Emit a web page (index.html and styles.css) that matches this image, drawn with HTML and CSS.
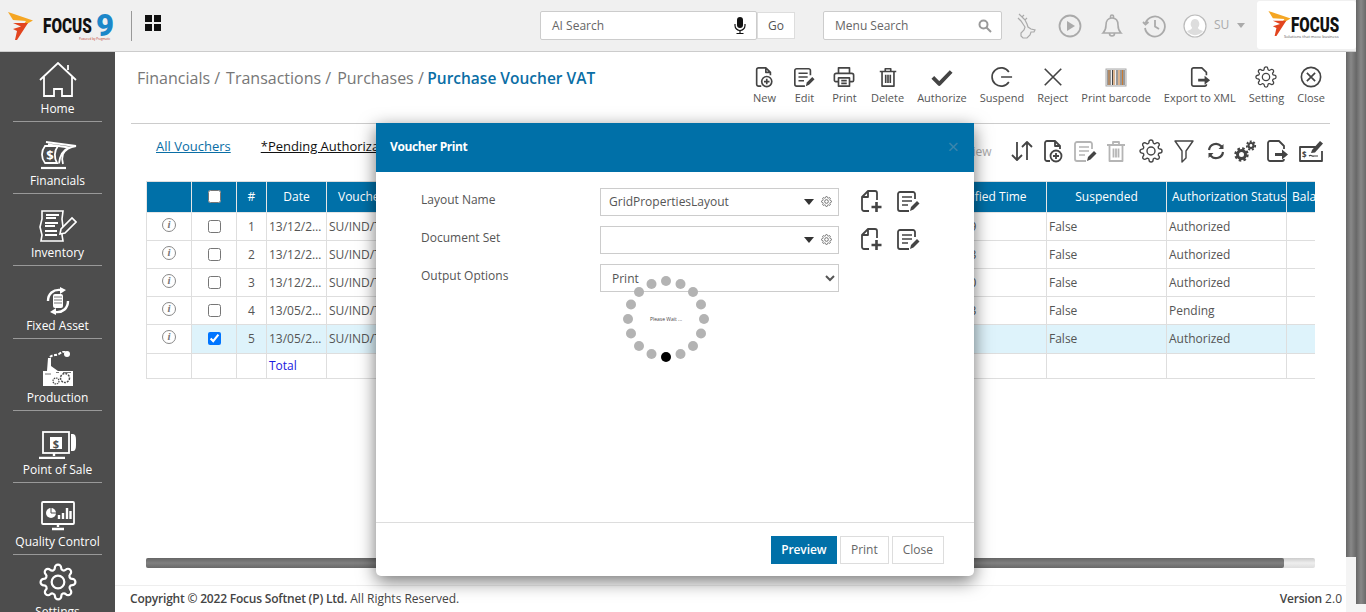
FILE: index.html
```html
<!DOCTYPE html>
<html lang="en">
<head>
    <meta charset="UTF-8">
    <title>Purchase Voucher VAT</title>
    <link rel="stylesheet" href="styles.css">
</head>
<body>
    <!-- shared icons -->
    <svg class="defs" width="0" height="0">
        <symbol id="gear" viewBox="0 0 24 24">
            <circle cx="12" cy="12" r="4"/>
            <path d="M19.4 15a1.65 1.65 0 0 0 .33 1.82l.06.06a2 2 0 0 1 0 2.83 2 2 0 0 1-2.83 0l-.06-.06a1.65 1.65 0 0 0-1.82-.33 1.65 1.65 0 0 0-1 1.51V21a2 2 0 0 1-2 2 2 2 0 0 1-2-2v-.09A1.65 1.65 0 0 0 9 19.4a1.65 1.65 0 0 0-1.82.33l-.06.06a2 2 0 0 1-2.83 0 2 2 0 0 1 0-2.83l.06-.06a1.65 1.65 0 0 0 .33-1.82 1.65 1.65 0 0 0-1.51-1H3a2 2 0 0 1-2-2 2 2 0 0 1 2-2h.09A1.65 1.65 0 0 0 4.6 9a1.65 1.65 0 0 0-.33-1.82l-.06-.06a2 2 0 0 1 0-2.83 2 2 0 0 1 2.83 0l.06.06a1.65 1.65 0 0 0 1.82.33H9a1.65 1.65 0 0 0 1-1.51V3a2 2 0 0 1 2-2 2 2 0 0 1 2 2v.09a1.65 1.65 0 0 0 1 1.51 1.65 1.65 0 0 0 1.82-.33l.06-.06a2 2 0 0 1 2.83 0 2 2 0 0 1 0 2.83l-.06.06a1.65 1.65 0 0 0-.33 1.82V9a1.65 1.65 0 0 0 1.51 1H21a2 2 0 0 1 2 2 2 2 0 0 1-2 2h-.09a1.65 1.65 0 0 0-1.51 1z"/>
        </symbol>
        <symbol id="doc-new" viewBox="0 0 24 24">
            <path d="M9 22H6a2 2 0 0 1-2-2V4a2 2 0 0 1 2-2h8l5 5v3M14 2v5h5"/>
            <circle cx="15" cy="17" r="5.5"/>
            <path d="M15 14v6M12 17h6"/>
        </symbol>
        <symbol id="doc-edit" viewBox="0 0 24 24">
            <path d="M19 10V5a2 2 0 0 0-2-2H4a2 2 0 0 0-2 2v15a2 2 0 0 0 2 2h9"/>
            <path d="M6 8h10M6 12h10M6 16h6" stroke-width="1.6"/>
            <path class="solid" d="M14 22l1-4 6-6 2.500 2.500-6 6z"/>
        </symbol>
        <symbol id="trash" viewBox="0 0 24 24">
            <path d="M3 6h18M9 6V3h6v3M5.500 6v16h13V6"/>
            <path d="M9.500 9.500v9M12 9.500v9M14.500 9.500v9"/>
        </symbol>
        <symbol id="export" viewBox="0 0 24 24">
            <path d="M19 20a2 2 0 0 1-2 2H5a2 2 0 0 1-2-2V4a2 2 0 0 1 2-2h9l5 5v3"/>
            <path class="solid" d="M10 14h7v-3.500l6 5-6 5V17h-7z"/>
        </symbol>
        <symbol id="doc-add" viewBox="0 0 24 24">
            <path d="M10 22H5a2 2 0 0 1-2-2V8l6-6h7a2 2 0 0 1 2 2v7M9 2v6H3"/>
            <path d="M17.500 13v10M12.500 18h10" stroke-width="2.600"/>
        </symbol>
        <symbol id="flag" viewBox="0 0 26 28">
            <path fill="#f5a623" d="M0 0l25 8.500-11 6 4-5.500-13-1z"/>
            <path fill="#e2451f" d="M5 11h15L9 28H7l2-9-4-2 8-2.500z"/>
        </symbol>
    </svg>

    <div class="page">
        <div class="app">
            <header class="topbar">
                <div class="brand">
                    <svg class="brand-mark"><use href="#flag"/></svg>
                    <span class="brand-name">FOCUS</span>
                    <span class="brand-nine">9</span>
                    <span class="brand-tag">Powered by Pragmatic</span>
                </div>
                <div class="brand-sep"></div>
                <div class="apps-grid"><i></i><i></i><i></i><i></i></div>

                <div class="search ai-search">
                    <span>AI Search</span>
                    <svg width="12" height="18" viewBox="0 0 12 18">
                        <rect x="3" y="0" width="6" height="11" rx="3" fill="#111"/>
                        <path d="M1 7v1.500a5 5 0 0 0 10 0V7M6 13.500V16M2.500 16.500h7" fill="none" stroke="#111" stroke-width="1.200"/>
                    </svg>
                </div>
                <button class="go-btn">Go</button>
                <div class="search menu-search">
                    <span>Menu Search</span>
                    <svg width="14" height="14" viewBox="0 0 14 14" fill="none" stroke="#999" stroke-width="2">
                        <circle cx="5.500" cy="5.500" r="4"/>
                        <path d="M8.500 8.500l4.500 4.500"/>
                    </svg>
                </div>

                <div class="top-icons">
                    <svg class="deer" width="20" height="26" viewBox="0 0 20 26" fill="none" stroke="#aaa" stroke-width="1.200">
                        <path d="M2 1l3 3 2-2M5 4l3 3 2-2M8 7l2 4 1 3 3 2 4 1-1 2-3 0-1 3-3 3-4 0-2-2 0-3 3-3 1-3-2-3-2-3-3-3"/>
                    </svg>
                    <svg class="play" width="24" height="24" viewBox="0 0 24 24" fill="none" stroke="#aaa" stroke-width="1.800">
                        <circle cx="12" cy="12" r="10.500"/>
                        <path d="M9 7l8 5-8 5z" fill="#aaa" stroke="none"/>
                    </svg>
                    <svg class="bell" width="22" height="24" viewBox="0 0 22 24" fill="none" stroke="#aaa" stroke-width="1.600">
                        <path d="M2 19c2-2 3-4 3-8 0-4 2-7 6-7s6 3 6 7c0 4 1 6 3 8zM9.500 4V2.500a1.500 1.500 0 0 1 3 0V4M8.500 19.500a2.500 2.500 0 0 0 5 0"/>
                    </svg>
                    <svg class="history" width="24" height="24" viewBox="0 0 24 24" fill="none" stroke="#aaa" stroke-width="1.800">
                        <path d="M3.500 9a10 10 0 1 1-.5 5M1 8l2.500 2.500L6.500 8M13 6v6.500l4 2.500"/>
                    </svg>
                    <svg class="avatar" width="24" height="24" viewBox="0 0 24 24">
                        <circle cx="12" cy="12" r="11" fill="#fff" stroke="#bbb" stroke-width="1.200"/>
                        <path d="M12 5a4.500 5 0 0 1 3 8.500c0 1.500 1 2 5 3.500a9.800 9.800 0 0 1-16 0c4-1.500 5-2 5-3.500A4.500 5 0 0 1 12 5z" fill="#ddd"/>
                    </svg>
                    <span class="user">SU</span>
                    <span class="user-caret"></span>
                </div>

                <div class="logo-box">
                    <svg class="brand-mark small"><use href="#flag"/></svg>
                    <span class="logo-name">FOCUS</span>
                    <span class="logo-tag">Solutions that move business</span>
                </div>
            </header>

            <div class="body">
                <nav class="sidebar">
                    <a class="nav-item">
                        <svg width="38" height="36" viewBox="0 0 38 36" fill="none" stroke="#fff" stroke-width="1.800">
                            <path d="M1 18L19 1l18 17M5 15v19h10v-7h8v7h10V15M29 8V3"/>
                        </svg>
                        <span>Home</span>
                    </a>
                    <a class="nav-item">
                        <svg width="38" height="29" viewBox="0 0 38 29" fill="none" stroke="#fff" stroke-width="1.800">
                            <path d="M6 5C2 10 2 17 6 22h12c-3-5-3-12 1-17z"/>
                            <path d="M7 1l30 4c-7 1-11 4-13 8-1 3-1 7 0 10M9 3.500L30 6.500c-5 2-9 6-10 16"/>
                            <path d="M2 27h25" stroke-width="2.200"/>
                            <text class="bill" x="11" y="18.500">$</text>
                        </svg>
                        <span>Financials</span>
                    </a>
                    <a class="nav-item">
                        <svg width="38" height="32" viewBox="0 0 38 32" fill="none" stroke="#fff" stroke-width="1.600">
                            <path d="M3 1h21l-1 8 1 8-1 8 1 6H2l1-6-2-8 2-8z"/>
                            <path d="M7 5h13M7 8h10M6 13h13M6 16h10M6 21h12M6 25h12" stroke-width="2"/>
                            <path d="M21 24l1-5L33 8l4 4-11 11z" fill="#4d4d4d"/>
                        </svg>
                        <span>Inventory</span>
                    </a>
                    <a class="nav-item">
                        <svg width="24" height="28" viewBox="0 0 24 28" fill="none" stroke="#fff" stroke-width="2.400">
                            <path d="M2 14C2 7 7 2 15 3M22 14c0 7-5 12-13 11"/>
                            <path d="M14 0l6 3-6 4zM10 21l-6 4 6 3z" fill="#fff" stroke="none"/>
                            <rect x="7" y="7" width="10" height="14" rx="2" fill="#fff" stroke="none"/>
                            <path d="M8 10h8M8 13h8M8 16h8" stroke="#777" stroke-width="1"/>
                        </svg>
                        <span>Fixed Asset</span>
                    </a>
                    <a class="nav-item">
                        <svg width="32" height="36" viewBox="0 0 32 36">
                            <path d="M1 35V20h4L6 7h3v8l7 5h15v15z" fill="#fff"/>
                            <path d="M8 6c3-3 6-1 9-3 3-2 5-3 7-2" fill="none" stroke="#fff" stroke-width="2" stroke-dasharray="3 1.500"/>
                            <circle cx="25" cy="3" r="3" fill="#fff"/>
                            <circle cx="23" cy="27" r="4.500" fill="#fff" stroke="#4d4d4d" stroke-width="1.500" stroke-dasharray="2 1"/>
                            <circle cx="14" cy="30" r="3" fill="#fff" stroke="#4d4d4d" stroke-width="1.200" stroke-dasharray="1.500 .8"/>
                            <path d="M3 23h6M14 21.500h3M21 21.500h8" stroke="#777" stroke-width="1"/>
                        </svg>
                        <span>Production</span>
                    </a>
                    <a class="nav-item">
                        <svg width="38" height="28" viewBox="0 0 38 28" fill="none" stroke="#fff" stroke-width="1.800">
                            <rect x="4" y="1" width="26" height="21"/>
                            <path d="M32 3h2c2 0 3 2 3 6v5c0 4-1 6-3 6h-2z" fill="#fff" stroke="none"/>
                            <path d="M15 22v3M0 27h26" stroke-width="2.400"/>
                            <rect x="11" y="6" width="12" height="12" fill="#fff" stroke="none"/>
                            <text class="pos" x="17" y="16.500">$</text>
                        </svg>
                        <span>Point of Sale</span>
                    </a>
                    <a class="nav-item">
                        <svg width="34" height="30" viewBox="0 0 34 30" fill="none" stroke="#fff" stroke-width="1.800">
                            <rect x="1" y="1" width="32" height="22" rx="1"/>
                            <circle cx="10" cy="12" r="5" fill="#fff" stroke="none"/>
                            <path d="M10 12V7M10 12l5 0" stroke="#4d4d4d" stroke-width="1"/>
                            <path d="M18 18v-4M22 18v-6M26 18V7M29.500 18V10" stroke-width="2.400"/>
                            <path d="M17 23v3M11 28h12" stroke-width="2.400"/>
                        </svg>
                        <span>Quality Control</span>
                    </a>
                    <a class="nav-item">
                        <svg class="ico side-gear" width="38" height="38"><use href="#gear"/></svg>
                        <span>Settings</span>
                    </a>
                </nav>

                <main class="content">
                    <div class="title-row">
                        <div class="crumbs">
                            <span>Financials /</span>
                            <span>Transactions /</span>
                            <span>Purchases /</span>
                            <b>Purchase Voucher VAT</b>
                        </div>
                        <div class="actions">
                            <a class="action"><svg class="ico" width="22" height="22"><use href="#doc-new"/></svg><span>New</span></a>
                            <a class="action"><svg class="ico" width="22" height="22"><use href="#doc-edit"/></svg><span>Edit</span></a>
                            <a class="action">
                                <svg class="ico" width="22" height="22" viewBox="0 0 24 24">
                                    <path d="M6 8V2h12v6M6 17H3a1.500 1.500 0 0 1-1.500-1.500V10A2 2 0 0 1 3.500 8h17a2 2 0 0 1 2 2v5.500A1.500 1.500 0 0 1 21 17h-3M6 13h12v9H6zM9 16h6M9 19h6"/>
                                </svg>
                                <span>Print</span>
                            </a>
                            <a class="action"><svg class="ico" width="22" height="22"><use href="#trash"/></svg><span>Delete</span></a>
                            <a class="action">
                                <svg class="ico" width="22" height="22" viewBox="0 0 24 24" style="stroke-width:4.200">
                                    <path d="M2 12.500l7 7L22 6"/>
                                </svg>
                                <span>Authorize</span>
                            </a>
                            <a class="action">
                                <svg class="ico" width="22" height="22" viewBox="0 0 24 24">
                                    <path d="M19.500 6.500a10 10 0 1 0 0 11M11 12h12"/>
                                </svg>
                                <span>Suspend</span>
                            </a>
                            <a class="action">
                                <svg class="ico" width="22" height="22" viewBox="0 0 24 24">
                                    <path d="M3 3l18 18M21 3L3 21"/>
                                </svg>
                                <span>Reject</span>
                            </a>
                            <a class="action">
                                <svg width="22" height="22" viewBox="0 0 22 22">
                                    <rect x="1" y="3" width="20" height="17" fill="#eee" stroke="#aaa"/>
                                    <path d="M3 4v15M5 4v15M7.500 4v15M12 4v15M16 4v15M19 4v15" stroke="#444" stroke-width="1"/>
                                    <path d="M4 4v15M9 4v15M14 4v15M17.500 4v15" stroke="#c87a32" stroke-width="1"/>
                                </svg>
                                <span>Print barcode</span>
                            </a>
                            <a class="action"><svg class="ico" width="22" height="22"><use href="#export"/></svg><span>Export to XML</span></a>
                            <a class="action"><svg class="ico thin" width="22" height="22"><use href="#gear"/></svg><span>Setting</span></a>
                            <a class="action">
                                <svg class="ico" width="22" height="22" viewBox="0 0 24 24">
                                    <circle cx="12" cy="12" r="10.500"/>
                                    <path d="M7.500 7.500l9 9M16.500 7.500l-9 9"/>
                                </svg>
                                <span>Close</span>
                            </a>
                        </div>
                    </div>

                    <div class="tab-row">
                        <a class="view-link">All Vouchers</a>
                        <a class="view-link pending">*Pending Authorization</a>
                        <span class="view-text">View</span>
                        <div class="tools">
                            <svg class="ico" width="24" height="24" viewBox="0 0 24 24">
                                <path d="M7 3v18M2 16l5 5 5-5M17 21V3M12 8l5-5 5 5"/>
                            </svg>
                            <svg class="ico" width="24" height="24"><use href="#doc-new"/></svg>
                            <svg class="ico off" width="24" height="24"><use href="#doc-edit"/></svg>
                            <svg class="ico off" width="24" height="24"><use href="#trash"/></svg>
                            <svg class="ico thin t-gear" width="24" height="24"><use href="#gear"/></svg>
                            <svg class="ico thin t-filter" width="24" height="24" viewBox="0 0 24 24">
                                <path d="M3 2h18l-7 10v7l-4 4V12z"/>
                            </svg>
                            <svg class="ico" width="24" height="24" viewBox="0 0 24 24">
                                <path d="M5 11a7 7 0 0 1 12-4l1 1M19 13a7 7 0 0 1-12 4l-1-1" stroke-width="2.200"/>
                                <path class="solid" d="M19.500 5v5h-5zM4.500 19v-5h5z"/>
                            </svg>
                            <svg class="ico t-gears" width="24" height="24" viewBox="0 0 24 24">
                                <circle cx="8.500" cy="15.500" r="4" stroke-width="3"/>
                                <circle cx="8.500" cy="15.500" r="6" stroke-width="2.400" stroke-dasharray="2.500 2.200"/>
                                <circle cx="18" cy="6.500" r="2.500" stroke-width="2.200"/>
                                <circle cx="18" cy="6.500" r="4.200" stroke-width="1.800" stroke-dasharray="2 1.600"/>
                            </svg>
                            <svg class="ico" width="24" height="24"><use href="#export"/></svg>
                            <svg class="ico narrow" width="26" height="24" viewBox="0 0 26 24">
                                <path d="M20 8H1v14h22V12"/>
                                <path d="M4 18h0M10 17c2-2 3 1 5 0h4" stroke-width="1.200"/>
                                <text class="cheque" x="3" y="19">$</text>
                                <path class="solid" d="M12 14l1-3 8-9 3 2.500-8 9z"/>
                            </svg>
                        </div>
                    </div>

                    <div class="table-wrap">
                        <table class="grid">
                            <colgroup>
                                <col class="c-info"><col class="c-check"><col class="c-num"><col class="c-date">
                                <col class="c-wide"><col class="c-wide"><col class="c-wide"><col class="c-wide"><col class="c-wide">
                                <col class="c-wide"><col class="c-wide"><col class="c-wide"><col class="c-wide">
                            </colgroup>
                            <thead>
                                <tr>
                                    <th></th>
                                    <th><input type="checkbox"></th>
                                    <th>#</th>
                                    <th>Date</th>
                                    <th class="left voucher">Voucher No</th>
                                    <th></th><th></th><th></th><th></th>
                                    <th>Modified Time</th>
                                    <th>Suspended</th>
                                    <th class="left">Authorization Status</th>
                                    <th class="left">Balance</th>
                                </tr>
                            </thead>
                            <tbody>
                                <tr>
                                    <td class="mid"><span class="info">i</span></td>
                                    <td class="mid"><input type="checkbox"></td>
                                    <td class="mid">1</td>
                                    <td>13/12/2022</td><td>SU/IND/TAX/1</td>
                                    <td></td><td></td><td></td><td></td>
                                    <td>10:51:09</td><td>False</td><td>Authorized</td><td></td>
                                </tr>
                                <tr>
                                    <td class="mid"><span class="info">i</span></td>
                                    <td class="mid"><input type="checkbox"></td>
                                    <td class="mid">2</td>
                                    <td>13/12/2022</td><td>SU/IND/TAX/2</td>
                                    <td></td><td></td><td></td><td></td>
                                    <td>10:52:13</td><td>False</td><td>Authorized</td><td></td>
                                </tr>
                                <tr>
                                    <td class="mid"><span class="info">i</span></td>
                                    <td class="mid"><input type="checkbox"></td>
                                    <td class="mid">3</td>
                                    <td>13/12/2022</td><td>SU/IND/TAX/3</td>
                                    <td></td><td></td><td></td><td></td>
                                    <td>10:53:10</td><td>False</td><td>Authorized</td><td></td>
                                </tr>
                                <tr>
                                    <td class="mid"><span class="info">i</span></td>
                                    <td class="mid"><input type="checkbox"></td>
                                    <td class="mid">4</td>
                                    <td>13/05/2023</td><td>SU/IND/TAX/4</td>
                                    <td></td><td></td><td></td><td></td>
                                    <td>11:20:13</td><td>False</td><td>Pending</td><td></td>
                                </tr>
                                <tr class="picked">
                                    <td class="mid first"><span class="info">i</span></td>
                                    <td class="mid"><input type="checkbox" checked></td>
                                    <td class="mid">5</td>
                                    <td>13/05/2023</td><td>SU/IND/TAX/5</td>
                                    <td></td><td></td><td></td><td></td>
                                    <td></td><td>False</td><td>Authorized</td><td></td>
                                </tr>
                                <tr class="total">
                                    <td></td><td></td><td></td>
                                    <td class="total-label">Total</td>
                                    <td></td><td></td><td></td><td></td><td></td><td></td><td></td><td></td><td></td>
                                </tr>
                            </tbody>
                        </table>
                    </div>

                    <div class="hscroll"><div class="hscroll-thumb"></div></div>

                    <footer class="footer">
                        <div><b>Copyright © 2022 Focus Softnet (P) Ltd.</b> All Rights Reserved.</div>
                        <div><b>Version</b> 2.0</div>
                    </footer>
                </main>
                <div class="vscroll inner"><div class="vscroll-thumb"></div></div>
            </div>
        </div>
        <div class="vscroll outer"><div class="vscroll-thumb"></div></div>
    </div>

    <!-- print dialog -->
    <div class="modal">
        <div class="modal-head">
            <h4>Voucher Print</h4>
            <span class="modal-x">×</span>
        </div>
        <div class="modal-body">
            <div class="form-row">
                <label>Layout Name</label>
                <div class="combo">
                    <span>GridPropertiesLayout</span>
                    <i class="combo-caret"></i>
                    <svg class="ico tiny" width="11" height="11"><use href="#gear"/></svg>
                </div>
                <svg class="ico side" width="24" height="24"><use href="#doc-add"/></svg>
                <svg class="ico side" width="24" height="24"><use href="#doc-edit"/></svg>
            </div>
            <div class="form-row">
                <label>Document Set</label>
                <div class="combo">
                    <span></span>
                    <i class="combo-caret"></i>
                    <svg class="ico tiny" width="11" height="11"><use href="#gear"/></svg>
                </div>
                <svg class="ico side" width="24" height="24"><use href="#doc-add"/></svg>
                <svg class="ico side" width="24" height="24"><use href="#doc-edit"/></svg>
            </div>
            <div class="form-row">
                <label>Output Options</label>
                <select class="output">
                    <option>Print</option>
                </select>
            </div>

            <svg class="spinner" width="100" height="100" viewBox="-50 -50 100 100">
                <g fill="#b3b3b3">
                    <circle cx="0" cy="-38" r="5"/><circle cx="14.500" cy="-35" r="5"/>
                    <circle cx="27" cy="-27" r="5"/><circle cx="35" cy="-14.500" r="5"/>
                    <circle cx="38" cy="0" r="5"/><circle cx="35" cy="14.500" r="5"/>
                    <circle cx="27" cy="27" r="5"/><circle cx="14.500" cy="35" r="5"/>
                    <circle cx="-14.500" cy="35" r="5"/><circle cx="-27" cy="27" r="5"/>
                    <circle cx="-35" cy="14.500" r="5"/><circle cx="-38" cy="0" r="5"/>
                    <circle cx="-35" cy="-14.500" r="5"/><circle cx="-27" cy="-27" r="5"/>
                    <circle cx="-14.500" cy="-35" r="5"/>
                </g>
                <circle cx="0" cy="38" r="5" fill="#000"/>
                <text x="0" y="2" text-anchor="middle">Please Wait ...</text>
            </svg>
        </div>
        <div class="modal-foot">
            <button class="mbtn primary">Preview</button>
            <button class="mbtn">Print</button>
            <button class="mbtn">Close</button>
        </div>
    </div>
</body>
</html>
```

FILE: styles.css
```css
/* colors */
:root {
    --blue: #0070a8;
    --line: #dedede;
    --side: #4d4d4d;
    --ink: #444;
}

* {
    box-sizing: border-box;
}

html, body {
    margin: 0;
    height: 612px;
    overflow: hidden;
}

body {
    font-family: "Open Sans", "Liberation Sans", sans-serif;
    font-size: 12px;
    color: #555;
    background: #fff;
    position: relative;
}

.defs {
    position: absolute;
}

.page {
    display: flex;
    height: 612px;
}

.app {
    width: 1356px;
    display: flex;
    flex-direction: column;
}

/* icon defaults */
.ico {
    fill: none;
    stroke: var(--ink);
    stroke-width: 1.8;
    stroke-linejoin: round;
    flex: none;
}

.ico .solid, .solid {
    fill: var(--ink);
    stroke: none;
}

.ico.thin {
    stroke-width: 1.4;
}

.ico.off {
    stroke: #b5b5b5;
}

.ico.off .solid {
    fill: #b5b5b5;
}

/* top bar */
.topbar {
    height: 52px;
    flex: none;
    display: flex;
    align-items: center;
    background: #f0f0f0;
    border-bottom: 1px solid #ccc;
}

.brand {
    position: relative;
    width: 131px;
    height: 51px;
    display: flex;
    align-items: center;
    padding-left: 8px;
    flex: none;
}

.brand-mark {
    width: 26px;
    height: 28px;
    flex: none;
}

.brand-name {
    font-family: Roboto, sans-serif;
    font-weight: 900;
    font-size: 21px;
    color: #111;
    margin-left: 9px;
    display: inline-block;
    width: 50px;
    transform: scaleX(.73);
    transform-origin: left center;
}

.brand-nine {
    font-family: Roboto, sans-serif;
    font-weight: 900;
    font-size: 31px;
    color: #1c87c9;
    line-height: 30px;
    margin-left: 3px;
}

.brand-tag {
    position: absolute;
    left: 79px;
    top: 38px;
    font-size: 3px;
    line-height: 3px;
    color: #c0392b;
}

.brand-sep {
    width: 1px;
    height: 30px;
    background: #999;
    flex: none;
}

.apps-grid {
    display: grid;
    grid-template-columns: 7px 7px;
    gap: 2px;
    margin-left: 13px;
    margin-top: -5px;
    flex: none;
}

.apps-grid i {
    height: 7px;
    background: #111;
}

.search {
    height: 29px;
    display: flex;
    align-items: center;
    justify-content: space-between;
    background: #fff;
    border: 1px solid #ccc;
    border-radius: 2px;
    padding: 0 11px;
    color: #666;
    font-size: 12px;
    flex: none;
}

.ai-search {
    width: 217px;
    margin-left: 379px;
    padding-right: 10px;
}

.go-btn {
    width: 38px;
    height: 27px;
    border: 1px solid #ddd;
    background: #fff;
    color: #555;
    font: 12px "Open Sans", sans-serif;
    padding: 0;
    flex: none;
}

.menu-search {
    width: 179px;
    margin-left: 28px;
    padding-right: 9px;
}

.top-icons {
    display: flex;
    align-items: center;
    width: 256px;
    flex: none;
    position: relative;
    height: 30px;
    color: #aaa;
}

.top-icons svg, .user, .user-caret {
    position: absolute;
}

/* these sit on their own little strip so offsets are simplest */
.deer { left: 15px; top: 2px; }
.play { left: 56px; top: 3px; }
.bell { left: 99px; top: 3px; }
.history { left: 140px; top: 3px; }
.avatar { left: 181px; top: 3px; }
.user { left: 212px; top: 5px; font-size: 12px; }
.user-caret {
    left: 235px;
    top: 12px;
    border: 4px solid transparent;
    border-top: 5px solid #aaa;
    border-bottom: 0;
}

.logo-box {
    position: relative;
    width: 99px;
    height: 48px;
    margin-left: -1px;
    margin-top: -2px;
    background: #fff;
    border-radius: 3px;
    display: flex;
    align-items: center;
    padding: 0 0 3px 11px;
    flex: none;
}

.brand-mark.small {
    width: 24px;
    height: 25px;
}

.logo-name {
    font-family: Roboto, sans-serif;
    font-weight: 900;
    font-size: 21px;
    line-height: 24px;
    color: #111;
    margin: 4px 0 0 -1px;
    display: inline-block;
    transform: scaleX(.72);
    transform-origin: left center;
}

.logo-tag {
    position: absolute;
    left: 27px;
    top: 34px;
    font-size: 4px;
    line-height: 4px;
    color: #555;
    white-space: nowrap;
}

.body {
    flex: 1;
    display: flex;
    min-height: 0;
}

/* left menu */
.sidebar {
    width: 115px;
    flex: none;
    background: var(--side);
    overflow: hidden;
    height: 560px;
}

.nav-item {
    height: 72.2px;
    margin: 0 13px;
    display: flex;
    flex-direction: column;
    align-items: center;
    justify-content: flex-end;
    border-bottom: 1px solid #999;
    color: #fff;
    padding-bottom: 4px;
}

.nav-item:first-child {
    height: 70px;
}

.nav-item span {
    line-height: 16px;
    white-space: nowrap;
}

.nav-item svg {
    margin-bottom: 3px;
    flex: none;
}

.nav-item:last-child {
    border: none;
    height: 80px;
    justify-content: flex-start;
    padding-top: 8px;
}

.ico.side-gear {
    stroke: #fff;
    stroke-width: 1.4;
}

.nav-item text {
    stroke: none;
    font-weight: 700;
    font-family: "Open Sans", sans-serif;
}

.bill {
    fill: #fff;
    font-size: 13px;
    text-anchor: middle;
}

.pos {
    fill: #4d4d4d;
    font-size: 11px;
    text-anchor: middle;
}

/* main part */
.content {
    flex: 1;
    min-width: 0;
    display: flex;
    flex-direction: column;
}

.title-row {
    height: 72px;
    margin: 0 16px;
    display: flex;
    justify-content: space-between;
    border-bottom: 1px solid #ccc;
    flex: none;
}

.crumbs {
    padding: 14px 0 0 6px;
    font-size: 16px;
    line-height: 24px;
    color: #777;
    display: flex;
    gap: 6px;
    white-space: nowrap;
}

.crumbs b {
    color: #0a6ea5;
    font-weight: 600;
    font-size: 15.5px;
    margin-left: -2.5px;
}

.actions {
    display: flex;
    padding-top: 14px;
    margin-right: -1.5px;
}

.action {
    min-width: 40px;
    padding: 0 6.5px;
    display: flex;
    flex-direction: column;
    align-items: center;
    font-size: 11px;
    color: #555;
    white-space: nowrap;
}

.action span {
    line-height: 14px;
    margin-top: 3px;
}

.tab-row {
    height: 57px;
    flex: none;
    display: flex;
    align-items: center;
    padding: 0 22px 14px 41px;
    position: relative;
}

.view-link {
    color: #0a6ea5;
    text-decoration: underline;
    font-size: 13px;
    margin-right: 30px;
    white-space: nowrap;
}

.view-link.pending {
    color: #111;
}

.view-text {
    margin: 11px 18px 0 auto;
    color: #aaa;
    font-size: 12px;
}

.tools {
    display: flex;
    gap: 7.5px;
    align-items: center;
    margin-top: 11px;
}

/* the toolbar spacing is not even in the app */
.tools .t-gear { margin-left: 3px; }
.tools .t-filter { margin-left: 2px; }
.tools .t-gears { margin-left: -2px; }
.tools .narrow { margin: 0 -1px 0 3px; }

.cheque {
    font-size: 8px;
    stroke: none;
    fill: var(--ink);
    font-weight: 700;
}

/* data grid */
.table-wrap {
    margin-left: 31px;
    width: 1169px;
    height: 377px;
    overflow: hidden;
    flex: none;
}

.grid {
    border-collapse: collapse;
    table-layout: fixed;
    width: 1260px;
    color: #555;
    border: 1px solid var(--line);
}

.c-info, .c-check { width: 45px; }
.c-num { width: 30px; }
.c-date { width: 60px; }
.c-wide { width: 120px; }

.grid th {
    height: 31px;
    background: var(--blue);
    color: #fff;
    font-weight: 400;
    border: 1px solid #e6e6e6;
    border-top-color: var(--line);
    padding: 0 2px 2px;
    white-space: nowrap;
    overflow: hidden;
}

.grid th.left {
    text-align: left;
    padding-left: 5px;
}

.grid th.voucher {
    padding-left: 11px;
}

.grid td {
    height: 28px;
    border: 1px solid var(--line);
    padding: 0 2px;
    white-space: nowrap;
    overflow: hidden;
    text-overflow: ellipsis;
}

.grid td.mid {
    text-align: center;
}

.grid input {
    margin: -2px 0 0;
    vertical-align: middle;
}

.picked td {
    background: #def3fb;
    height: 29px;
    padding-bottom: 2px;
}

.picked td.first {
    background: #fff;
}

.total td {
    height: 25px;
    padding-bottom: 2px;
}

.total-label {
    color: #1a1ae0;
}

.info {
    display: inline-block;
    width: 14px;
    height: 14px;
    border: 1.5px solid #888;
    border-radius: 50%;
    font: italic 700 11px/11px "Liberation Serif", serif;
    color: #777;
    text-align: center;
    vertical-align: 3px;
}

/* scroll bars */
.hscroll {
    margin-left: 31px;
    width: 1169px;
    height: 10px;
    background: linear-gradient(#ccc, #eee 50%, #ddd);
    border-radius: 2px;
    flex: none;
}

.hscroll-thumb {
    width: 1138px;
    height: 10px;
    border-radius: 2px;
    background: linear-gradient(#666, #808080 50%, #6a6a6a);
}

.vscroll {
    width: 10px;
    flex: none;
    background: #f4f4f4;
}

.vscroll-thumb {
    background: linear-gradient(90deg, #666, #888 50%, #6a6a6a);
}

.vscroll.inner .vscroll-thumb {
    height: 505px;
}

.vscroll.outer {
    height: 612px;
}

.vscroll.outer .vscroll-thumb {
    height: 604px;
}

.footer {
    margin-top: 17px;
    flex: 1;
    display: flex;
    justify-content: space-between;
    align-items: center;
    padding: 0 4px 2px 15px;
    border-top: 1px solid #eee;
    color: #444;
}

.footer b {
    font-weight: 600;
    letter-spacing: -.2px;
}

/* modal */
.modal {
    position: absolute;
    left: 376px;
    top: 123px;
    width: 598px;
    height: 453px;
    background: #fff;
    border-radius: 0 0 5px 5px;
    box-shadow: 0 5px 18px rgba(0,0,0,.55);
    display: flex;
    flex-direction: column;
}

.modal-head {
    height: 49px;
    background: var(--blue);
    display: flex;
    align-items: center;
    justify-content: space-between;
    padding: 0 15px 2px 14px;
    flex: none;
}

.modal-head h4 {
    margin: 0;
    font-size: 12px;
    font-weight: 700;
    letter-spacing: -.4px;
    color: #fff;
}

.modal-x {
    font-size: 20px;
    line-height: 20px;
    color: #3c86ad;
}

.modal-body {
    flex: 1;
    position: relative;
    padding: 16px 0 0 45px;
    display: flex;
    flex-direction: column;
    gap: 10px;
}

.form-row {
    display: flex;
    align-items: center;
    height: 28px;
    color: #555;
}

.form-row label {
    width: 179px;
    margin-top: -6px;
    flex: none;
}

.combo {
    width: 239px;
    height: 28px;
    border: 1px solid #ccc;
    display: flex;
    align-items: center;
    padding: 0 6px 1px 8px;
    color: #555;
    flex: none;
}

.combo span {
    flex: 1;
}

.combo-caret {
    border: 5.5px solid transparent;
    border-top: 6px solid #333;
    border-bottom: 0;
    margin-right: 7px;
}

.ico.tiny {
    stroke-width: 2;
    stroke: #666;
}

.ico.side {
    margin: -2px -7px 0 20px;
}

.output {
    width: 239px;
    height: 28px;
    border: 1px solid #ccc;
    background: #fff;
    color: #555;
    font: 12px "Open Sans", sans-serif;
    padding: 0 7px;
    flex: none;
}

.spinner {
    position: absolute;
    left: 240px;
    top: 97px;
}

.spinner text {
    font-size: 5px;
    fill: #444;
}

.modal-foot {
    height: 54px;
    flex: none;
    border-top: 1px solid #ddd;
    display: flex;
    justify-content: flex-end;
    align-items: center;
    gap: 3px;
    padding: 0 30px 0 0;
}

.mbtn {
    height: 28px;
    padding: 0 10px;
    background: #fff;
    border: 1px solid #ddd;
    color: #666;
    font: 12px "Open Sans", sans-serif;
}

.mbtn.primary {
    background: var(--blue);
    border-color: var(--blue);
    color: #fff;
    font-weight: 600;
    padding: 0 9.5px;
    letter-spacing: -.1px;
}
```
